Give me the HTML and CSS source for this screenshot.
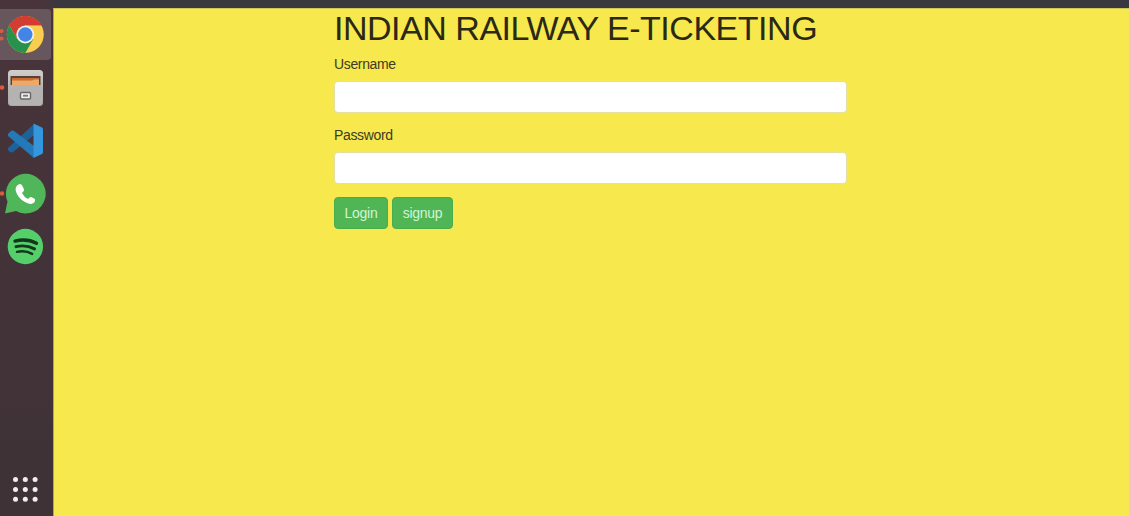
FILE: index.html
```html
<!DOCTYPE html>
<html lang="en">
<head>
<meta charset="utf-8">
<title>Indian Railway E-Ticketing</title>
<link rel="stylesheet" href="styles.css">
</head>
<body>
<div class="topbar"></div>
<div class="desktop">
  <nav class="dock">
    <div class="app active">
      <svg class="icon" viewBox="0 0 53 53">
        <circle cx="1.6" cy="23" r="2" fill="#d95b3c"/><circle cx="1.6" cy="30.500" r="2" fill="#d95b3c"/>
        <circle cx="25.300" cy="26.500" r="18.500" fill="#f9ce50"/>
        <path d="M25.300 17.300 9.300 17.250A18.500 18.500 0 0 1 41.300 17.300Z" fill="#d33d31"/>
        <path d="M9.300 17.250 17.300 31.100 25.300 26.500V17.300H41.300A18.500 18.500 0 0 0 9.300 17.250Z" fill="#d33d31"/>
        <path d="M9.300 17.250A18.500 18.500 0 0 0 25.300 45L33.300 31.100 25.300 26.500 17.300 31.100Z" fill="#27924b"/>
        <circle cx="25.300" cy="26.500" r="9" fill="#f2efed"/>
        <circle cx="25.300" cy="26.500" r="7.200" fill="#4285e6"/>
      </svg>
    </div>
    <div class="app">
      <svg class="icon" viewBox="0 0 53 53">
        <defs><linearGradient id="cabinet" x2="0" y2="1"><stop stop-color="#d0cdca"/><stop offset="1" stop-color="#a09f9d"/></linearGradient></defs>
        <circle cx="2" cy="26.500" r="2.300" fill="#d95b3c"/>
        <rect x="8" y="9" width="35" height="36" rx="3.500" fill="url(#cabinet)"/>
        <path d="M10.500 15h30v10h-30z" fill="#55423a"/>
        <path d="M12 17h27v3H12z" fill="#c96b32"/>
        <path d="M12 19.500h20l2-1h5v7H12z" fill="#eda965"/>
        <path d="M8.500 24h34v17q0 3.500-3.500 3.500H12q-3.500 0-3.500-3.500z" fill="#b4b3b1"/>
        <rect x="20.500" y="31.500" width="10" height="6.500" rx="1" fill="#eee" stroke="#686766" stroke-width="1.400"/>
        <path d="M23 34.700h5" stroke="#777" stroke-width="1.800"/>
      </svg>
    </div>
    <div class="app">
      <svg class="icon" viewBox="0 0 53 53">
        <path d="m8 34 26-24v11L13 38Q11 39 9.500 37.500L8 36Z" fill="#1d639a"/>
        <path d="m8 20 3-3Q12.500 16 14 17L34 32v12L8 22Z" fill="#2479b9"/>
        <path d="m33.500 9.500 8.500 4q1 .5 1 2v22.500q0 1.500-1 2l-8.500 4Z" fill="#3596dc"/>
      </svg>
    </div>
    <div class="app">
      <svg class="icon" viewBox="0 0 53 53">
        <circle cx="2" cy="26.500" r="2.300" fill="#d95b3c"/>
        <path d="M5 46.500 7.500 34.500A19.900 19.900 0 1 1 16 44Z" fill="#50b65a"/>
        <path d="M18.500 17.500q2-1.200 3.500.8l2 4q.5 1.500-2 3.700 2 4.200 6 6 2-2.600 3.400-2l3.500 2q.8 3-1.900 4.300-3.500 1.700-8.500-1.500-7-4.300-8.700-10.800-1-4.300 2.700-6.500Z" fill="#fff"/>
      </svg>
    </div>
    <div class="app">
      <svg class="icon" viewBox="0 0 53 53">
        <circle cx="25.400" cy="26.500" r="17.700" fill="#54cf69"/>
        <g fill="none" stroke="#14351d" stroke-linecap="round">
          <path d="M15 21.100q11.800-2.900 21.500 2.100" stroke-width="3.400"/>
          <path d="M16 26.700q10-2.300 18.500 2.200" stroke-width="2.900"/>
          <path d="M17 31.900q8.500-1.800 15.200 2" stroke-width="2.400"/>
        </g>
      </svg>
    </div>
    <svg class="grid" viewBox="0 0 53 54" fill="#f3eeee">
      <circle cx="15.500" cy="17.500" r="2.500"/><circle cx="25.300" cy="17.500" r="2.500"/><circle cx="35.100" cy="17.500" r="2.500"/>
      <circle cx="15.500" cy="27.500" r="2.500"/><circle cx="25.300" cy="27.500" r="2.500"/><circle cx="35.100" cy="27.500" r="2.500"/>
      <circle cx="15.500" cy="37.300" r="2.500"/><circle cx="25.300" cy="37.300" r="2.500"/><circle cx="35.100" cy="37.300" r="2.500"/>
    </svg>
  </nav>
  <main class="page">
    <form class="login">
      <h1 class="title">INDIAN RAILWAY E-TICKETING</h1>
      <label class="label" for="user">Username</label>
      <input class="field" id="user" type="text">
      <label class="label" for="pass">Password</label>
      <input class="field" id="pass" type="password">
      <div class="actions">
        <button class="btn login-btn" type="button">Login</button>
        <button class="btn signup-btn" type="button">signup</button>
      </div>
    </form>
  </main>
</div>
</body>
</html>
```
FILE: styles.css
```css
* { box-sizing: border-box; }
body {
  margin: 0;
  height: 516px;
  display: flex;
  flex-direction: column;
  overflow: hidden;
  font-family: "Liberation Sans", Arial, sans-serif;
  font-size: 14px;
  letter-spacing: -0.35px;
  color: #3d3b22;
}
.topbar {
  height: 8px;
  flex: none;
  background: linear-gradient(90deg, #49343b 0, #49343b 40px, #38383e 62px);
}
.desktop { flex: 1; display: flex; min-height: 0; }
.dock {
  width: 53px;
  flex: none;
  display: flex;
  flex-direction: column;
  background: linear-gradient(#49343b, #433339 50%, #3e3236);
}
.app { height: 53px; flex: none; }
.active {
  width: 51px;
  padding: 1px 0;
  background: #67565b content-box;
  border-radius: 0 4px 4px 0;
}
.active .icon { margin-top: -1px; }
.icon, .grid { display: block; width: 53px; height: 53px; overflow: visible; }
.grid { height: 54px; margin-top: auto; }
.page { flex: 1; background: #f7e84d; border-top: 1px solid #d0c552; border-left: 1px solid #b5a748; }
.login {
  width: 513px;
  margin-left: 280px;
  display: flex;
  flex-direction: column;
}
.title {
  margin: 0 0 9px;
  font-size: 34px;
  line-height: 38px;
  font-weight: 400;
  letter-spacing: -0.48px;
  color: #2b2916;
  white-space: nowrap;
}
.label { height: 16px; line-height: 16px; margin-bottom: 9px; }
.field {
  width: 100%;
  height: 32px;
  margin: 0 0 14px;
  padding: 0 10px;
  border: 1px solid #e4e0a4;
  border-radius: 4px;
  background: #fff;
  outline: none;
}
.actions { display: flex; gap: 4px; margin-top: -1px; }
.btn {
  height: 32px;
  padding: 0;
  border: 1px solid #48ae4c;
  border-radius: 4px;
  background: #50b655;
  color: #d3f3d5;
  font: 14px "Liberation Sans", Arial, sans-serif;
  letter-spacing: -0.3px;
}
.login-btn { width: 54px; }
.signup-btn { width: 61px; }
```
